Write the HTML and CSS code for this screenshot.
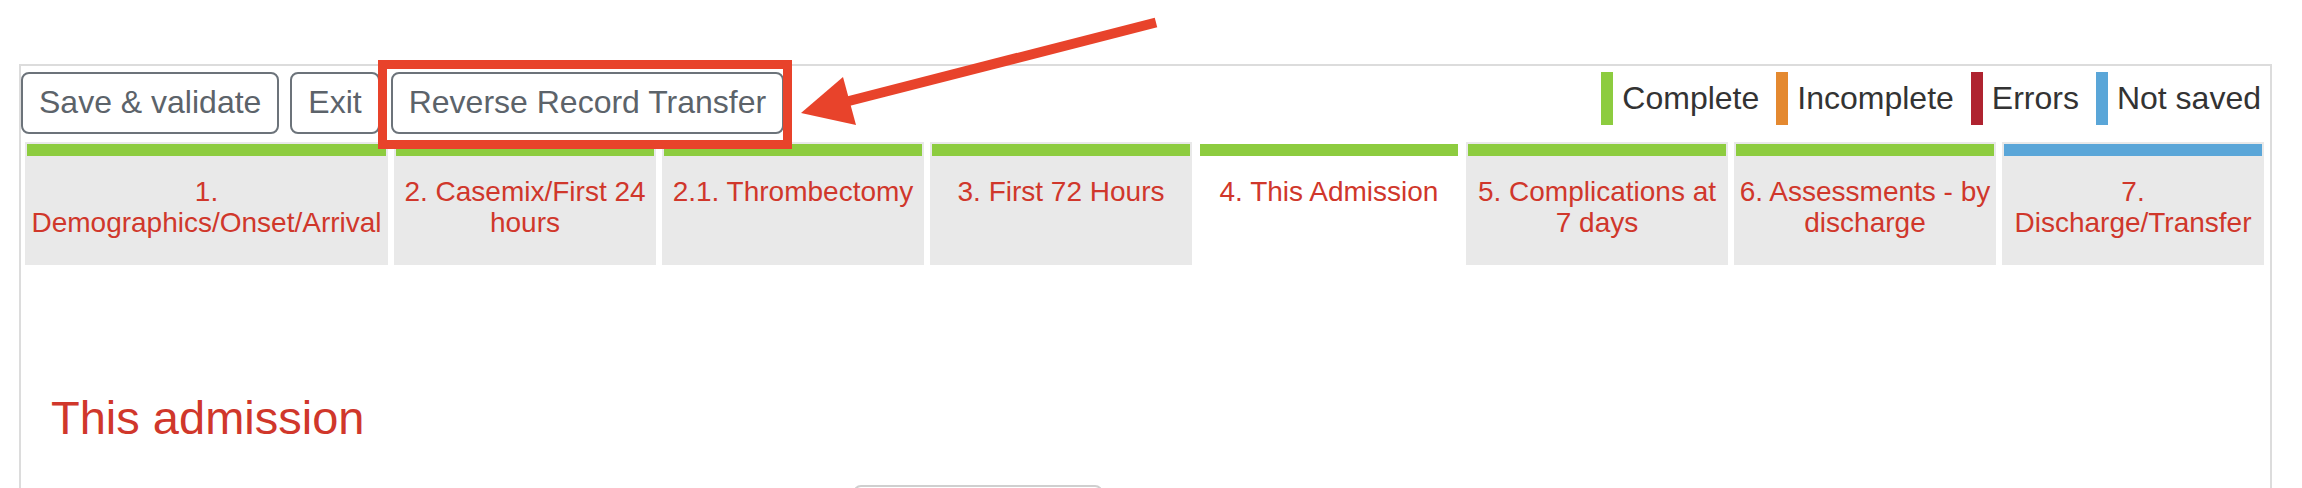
FILE: index.html
```html
<!DOCTYPE html>
<html lang="en">
<head>
    <meta charset="UTF-8">
    <meta name="viewport" content="width=device-width, initial-scale=1.0">
    <title>This Admission</title>
    <link rel="stylesheet" href="styles.css">
</head>
<body>

    <div class="record">
        <div class="toolbar">
            <div class="actions">
                <button class="btn">Save &amp; validate</button>
                <button class="btn">Exit</button>
                <button class="btn">Reverse Record Transfer</button>
            </div>

            <ul class="legend">
                <li><span class="swatch complete"></span>Complete</li>
                <li><span class="swatch incomplete"></span>Incomplete</li>
                <li><span class="swatch errors"></span>Errors</li>
                <li><span class="swatch unsaved"></span>Not saved</li>
            </ul>
        </div>

        <!-- Section tabs -->
        <div class="tabs">
            <div class="tab">
                <div class="tab-bar complete"></div>
                <div class="tab-label">1. <span class="nowrap">Demographics/Onset/Arrival</span></div>
            </div>
            <div class="tab">
                <div class="tab-bar complete"></div>
                <div class="tab-label">2. Casemix/First 24 hours</div>
            </div>
            <div class="tab">
                <div class="tab-bar complete"></div>
                <div class="tab-label">2.1. Thrombectomy</div>
            </div>
            <div class="tab">
                <div class="tab-bar complete"></div>
                <div class="tab-label">3. First 72 Hours</div>
            </div>
            <div class="tab active">
                <div class="tab-bar complete"></div>
                <div class="tab-label">4. This Admission</div>
            </div>
            <div class="tab">
                <div class="tab-bar complete"></div>
                <div class="tab-label">5. Complications at 7 days</div>
            </div>
            <div class="tab">
                <div class="tab-bar complete"></div>
                <div class="tab-label">6. Assessments - by discharge</div>
            </div>
            <div class="tab">
                <div class="tab-bar unsaved"></div>
                <div class="tab-label">7. Discharge/Transfer</div>
            </div>
        </div>

        <h2 class="section-title">This admission</h2>

        <div class="field-box"></div>
    </div>

    <!-- Annotation: highlight box and arrow -->
    <div class="highlight"></div>
    <svg class="arrow" width="2302" height="160" viewBox="0 0 2302 160">
        <line x1="1156" y1="22.5" x2="847" y2="101.5" stroke="#e8432b" stroke-width="10"/>
        <polygon points="801,113 843,77 856,125" fill="#e8432b"/>
    </svg>

</body>
</html>
```

FILE: styles.css
```css
/* General Body and Layout */
body {
    font-family: "Liberation Sans", Arial, sans-serif;
    background-color: #fff;
    color: #333;
    margin: 0;
    padding: 0;
    overflow: hidden;
}

.record {
    margin: 64px 30px 0 19px;
    border: 2px solid #dcdcdc;
    min-height: 600px;
}

/* Toolbar */
.toolbar {
    display: flex;
    justify-content: space-between;
    align-items: flex-start;
    padding: 6px 9px 0 0;
}

.actions {
    display: flex;
    gap: 11px;
}

.btn {
    height: 62px;
    padding: 0 16px 2px;
    border: 2px solid #6c737a;
    border-radius: 8px;
    background-color: #fff;
    color: #5c636a;
    font-family: inherit;
    font-size: 32px;
    cursor: pointer;
}

.legend {
    list-style-type: none;
    margin: 0;
    padding: 0;
    display: flex;
    gap: 17px;
}

.legend li {
    display: flex;
    align-items: center;
    gap: 9px;
    font-size: 32px;
    color: #333;
}

.swatch {
    display: block;
    width: 12px;
    height: 53px;
}

.complete { background-color: #8dcc3f; }
.incomplete { background-color: #e48930; }
.errors { background-color: #af2330; }
.unsaved { background-color: #5aa6d8; }

/* Section Tabs */
.tabs {
    display: grid;
    grid-template-columns: 363px repeat(7, 1fr);
    gap: 6px;
    margin: 8px 6px 0 4px;
}

.tab {
    background-color: #e9e9e9;
    padding: 2px 2px 0;
    height: 123px;
    box-sizing: border-box;
}

.tab.active {
    background-color: #fff;
}

.tab-bar {
    height: 12px;
}

.tab-label {
    padding-top: 20px;
    text-align: center;
    font-size: 28px;
    line-height: 31px;
    color: #d0372b;
}

.nowrap {
    white-space: nowrap;
}

/* Content */
.section-title {
    margin: 125px 0 0 30px;
    font-size: 47px;
    font-weight: normal;
    color: #d0372b;
}

.field-box {
    margin: 40px 0 0 832px;
    width: 246px;
    height: 40px;
    border: 2px solid #cfcfcf;
    border-radius: 8px;
}

/* Annotation Overlay */
.highlight {
    position: absolute;
    left: 378px;
    top: 60px;
    width: 414px;
    height: 89px;
    box-sizing: border-box;
    border: 9px solid #e8432b;
}

.arrow {
    position: absolute;
    left: 0;
    top: 0;
    pointer-events: none;
}
```
